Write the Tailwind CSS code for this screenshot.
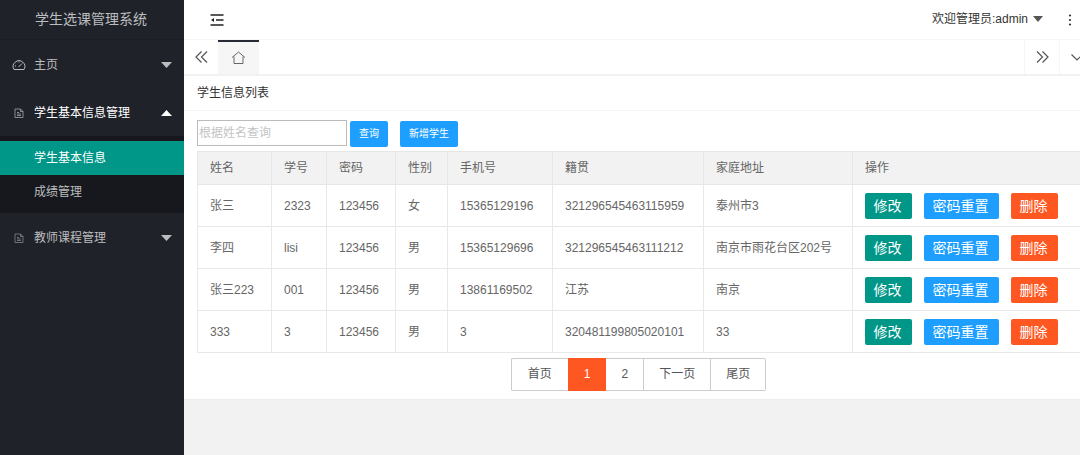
<!DOCTYPE html>
<html lang="zh-CN">
<head>
<meta charset="utf-8">
<title>学生选课管理系统</title>
<script src="https://cdn.jsdelivr.net/npm/@tailwindcss/browser@4"></script>
</head>
<body class="flex min-h-screen overflow-hidden bg-[#f2f2f2] font-['Liberation_Sans','Noto_Sans_CJK_SC',sans-serif] text-xs text-[#333]">
<svg class="hidden">
  <symbol id="doc" viewBox="0 0 10 10"><path d="M1 1h5.500L9 3.500V9.500H1zM6.500 1v2.500H9M3 4.500h2M3 6h4M3 7.500h4" fill="none" stroke="currentColor" stroke-width=".8"/></symbol>
</svg>
<aside class="w-46 shrink-0 bg-[#20222a] text-[#bcbdbf]">
  <h1 class="flex h-10 items-center border-b border-[#1c1e25] pb-[2px] pl-[35px] text-sm">学生选课管理系统</h1>
  <nav>
    <a href="#" class="flex h-12 items-center pt-px pr-3 pl-3">
      <svg class="h-3 w-[14px]" viewBox="0 0 14 12" fill="none" stroke="currentColor"><path d="M2 10.500A5.800 5.800 0 1 1 12 10.500Z" stroke-linejoin="round"/><path d="M6.500 8 10 4.500M3 7h1M7 2.500v1"/></svg>
      <span class="ml-2 flex-1">主页</span>
      <svg class="h-[6px] w-[11px]" viewBox="0 0 11 6"><path d="M0 0h11L5.500 6z" fill="currentColor"/></svg>
    </a>
    <a href="#" class="flex h-12 items-center pt-px pr-3 pl-3 text-white">
      <svg class="ml-[2px] size-[10px] text-[#a5a6aa]"><use href="#doc"/></svg>
      <span class="ml-[10px] flex-1">学生基本信息管理</span>
      <svg class="h-[6px] w-[11px]" viewBox="0 0 11 6"><path d="M0 6h11L5.500 0z" fill="currentColor"/></svg>
    </a>
    <div class="bg-[#16181d] pt-[5px] pb-1">
      <a href="#" class="flex h-[34px] items-center bg-[#009688] pl-[34px] text-white">学生基本信息</a>
      <a href="#" class="flex h-[34px] items-center pl-[34px]">成绩管理</a>
    </div>
    <a href="#" class="flex h-12 items-center pt-px pr-3 pl-3">
      <svg class="ml-[2px] size-[10px] text-[#85868a]"><use href="#doc"/></svg>
      <span class="ml-[10px] flex-1">教师课程管理</span>
      <svg class="h-[6px] w-[11px]" viewBox="0 0 11 6"><path d="M0 0h11L5.500 6z" fill="currentColor"/></svg>
    </a>
  </nav>
</aside>
<div class="min-w-0 flex-1 overflow-hidden">
  <header class="flex h-10 items-center justify-between border-b border-[#f6f6f6] bg-white pr-2 pl-[26px]">
    <button type="button" aria-label="收起菜单"><svg class="h-3 w-[14px]" viewBox="0 0 14 12" fill="none" stroke="#222" stroke-width="1.400"><path d="M.5 1h13M6 6h7.500M.5 11h13"/><path d="M1 6l3-2v4z" fill="#222" stroke="none"/></svg></button>
    <div class="flex items-center">
      <button type="button" class="flex items-center gap-[5px] pb-[2px]">欢迎管理员:admin
        <svg class="h-[6px] w-[10px]" viewBox="0 0 10 6"><path d="M0 0h10L5 6z" fill="#555"/></svg></button>
      <button type="button" aria-label="更多" class="ml-[25px]"><svg class="h-3 w-1" viewBox="0 0 4 12" fill="#333"><circle cx="2" cy="1.500" r="1.100"/><circle cx="2" cy="6" r="1.100"/><circle cx="2" cy="10.500" r="1.100"/></svg></button>
    </div>
  </header>
  <div class="flex h-9 border-b-2 border-[#f2f2f2] bg-white text-[#555]">
    <button type="button" aria-label="向左" class="flex w-[34px] items-center justify-center"><svg class="h-3 w-[13px]" viewBox="0 0 13 12" fill="none" stroke="currentColor" stroke-width="1.200"><path d="M6.500.5 1 6l5.500 5.500M12 .5 6.500 6l5.500 5.500"/></svg></button>
    <button type="button" aria-label="主页" class="flex w-[41px] items-center justify-center border-t-2 border-[#292b34] bg-[#f6f6f6] pb-[2px]"><svg class="h-[13px] w-[15px]" viewBox="0 0 15 13" fill="none" stroke="#666"><path d="M1 6.500 7.500 1 14 6.500M3 5.500v7h9v-7"/></svg></button>
    <button type="button" aria-label="向右" class="ml-auto flex w-[35px] items-center justify-center border-l border-[#f6f6f6]"><svg class="h-3 w-[13px]" viewBox="0 0 13 12" fill="none" stroke="currentColor" stroke-width="1.200"><path d="M1 .5 6.500 6 1 11.500M6.500.5 12 6l-5.500 5.500"/></svg></button>
    <button type="button" aria-label="展开" class="flex w-[21px] items-center overflow-hidden border-l border-[#f6f6f6] pl-[11px]"><svg class="h-[7px] w-3 shrink-0" viewBox="0 0 12 7" fill="none" stroke="currentColor" stroke-width="1.200"><path d="M.5.5 6 6 11.500.5"/></svg></button>
  </div>
  <main class="border-b border-[#ececec] bg-white pb-2">
    <h2 class="flex h-[35px] items-center border-b border-[#f6f6f6] pl-[13px]">学生信息列表</h2>
    <div class="pt-[9px] pl-[13px]">
      <form class="flex items-start">
        <input type="text" aria-label="姓名" placeholder="根据姓名查询" class="h-[26px] w-[150px] border border-[#bbb] px-px placeholder:text-[#c4c4c4]">
        <button type="button" class="mt-px ml-[3px] h-[26px] rounded-xs bg-[#1e9fff] px-[9px] text-[10px] text-white">查询</button>
        <button type="button" class="mt-px ml-3 h-[26px] rounded-xs bg-[#1e9fff] px-[9px] text-[10px] text-white">新增学生</button>
      </form>
      <table class="mt-1 w-full table-fixed border-collapse text-left text-[#666] [&_td]:border [&_td]:border-[#e8e8e8] [&_td]:pl-3 [&_td:last-child]:border-r-0 [&_th]:border [&_th]:border-[#e6e6e6] [&_th]:pl-3 [&_th]:font-normal [&_th:last-child]:border-r-0">
        <colgroup><col class="w-[74px]"><col class="w-[55px]"><col class="w-[69px]"><col class="w-[52px]"><col class="w-[105px]"><col class="w-[151px]"><col class="w-[149px]"><col></colgroup>
        <thead><tr class="h-[33px] bg-[#f2f2f2]"><th>姓名</th><th>学号</th><th>密码</th><th>性别</th><th>手机号</th><th>籍贯</th><th>家庭地址</th><th>操作</th></tr></thead>
        <tbody>
          <tr class="h-[42px]"><td>张三</td><td>2323</td><td>123456</td><td>女</td><td>15365129196</td><td>321296545463115959</td><td>泰州市3</td>
            <td><div class="flex gap-3 text-sm text-white"><button type="button" class="h-[26px] w-[47px] rounded-xs bg-[#009688] pr-[2px]">修改</button><button type="button" class="h-[26px] w-[75px] rounded-xs bg-[#1e9fff] pr-[2px]">密码重置</button><button type="button" class="h-[26px] w-[47px] rounded-xs bg-[#ff5722] pr-[2px]">删除</button></div></td></tr>
          <tr class="h-[42px]"><td>李四</td><td>lisi</td><td>123456</td><td>男</td><td>15365129696</td><td>321296545463111212</td><td>南京市雨花台区202号</td>
            <td><div class="flex gap-3 text-sm text-white"><button type="button" class="h-[26px] w-[47px] rounded-xs bg-[#009688] pr-[2px]">修改</button><button type="button" class="h-[26px] w-[75px] rounded-xs bg-[#1e9fff] pr-[2px]">密码重置</button><button type="button" class="h-[26px] w-[47px] rounded-xs bg-[#ff5722] pr-[2px]">删除</button></div></td></tr>
          <tr class="h-[42px]"><td>张三223</td><td>001</td><td>123456</td><td>男</td><td>13861169502</td><td>江苏</td><td>南京</td>
            <td><div class="flex gap-3 text-sm text-white"><button type="button" class="h-[26px] w-[47px] rounded-xs bg-[#009688] pr-[2px]">修改</button><button type="button" class="h-[26px] w-[75px] rounded-xs bg-[#1e9fff] pr-[2px]">密码重置</button><button type="button" class="h-[26px] w-[47px] rounded-xs bg-[#ff5722] pr-[2px]">删除</button></div></td></tr>
          <tr class="h-[42px]"><td>333</td><td>3</td><td>123456</td><td>男</td><td>3</td><td>320481199805020101</td><td>33</td>
            <td><div class="flex gap-3 text-sm text-white"><button type="button" class="h-[26px] w-[47px] rounded-xs bg-[#009688] pr-[2px]">修改</button><button type="button" class="h-[26px] w-[75px] rounded-xs bg-[#1e9fff] pr-[2px]">密码重置</button><button type="button" class="h-[26px] w-[47px] rounded-xs bg-[#ff5722] pr-[2px]">删除</button></div></td></tr>
        </tbody>
      </table>
      <nav aria-label="分页" class="mt-[5px] flex justify-center leading-[31px] text-[#555]">
        <a href="#" class="rounded-l-xs border border-r-0 border-[#ccc] px-4">首页</a>
        <a href="#" class="border-y border-[#ff5722] bg-[#ff5722] px-4 text-white">1</a>
        <a href="#" class="border-y border-r border-[#ccc] px-[15px]">2</a>
        <a href="#" class="border-y border-r border-[#ccc] px-[15px]">下一页</a>
        <a href="#" class="rounded-r-xs border-y border-r border-[#ccc] px-[15px]">尾页</a>
      </nav>
    </div>
  </main>
</div>
</body>
</html>
